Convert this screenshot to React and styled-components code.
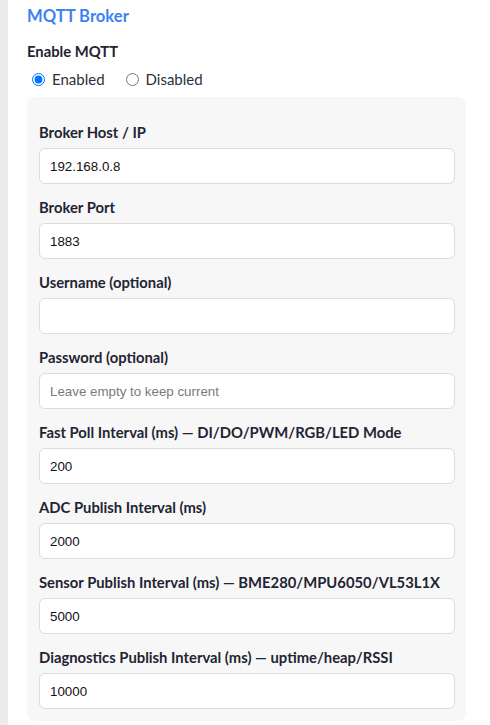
import React from 'react'
import styled, { createGlobalStyle } from 'styled-components'

const GlobalStyle = createGlobalStyle`
    html, body {
        margin: 0;
        padding: 0;
        background: #ffffff;
    }

    body {
        font-family: Lato, 'Noto Sans', 'Liberation Sans', sans-serif;
        color: #1f2433;
    }
`

const Page = styled.div`
    display: flex;
    min-height: 725px;
`

const SideRail = styled.div`
    width: 8px;
    flex-shrink: 0;
    background: #ebebeb;
`

const Section = styled.section`
    width: 439px;
    padding: 0 0 0 19px;
`

const Title = styled.h2`
    margin: 0;
    padding-top: 4px;
    font-size: 16.6px;
    line-height: 24px;
    font-weight: 700;
    color: #3b82f6;
`

const Label = styled.label`
    display: block;
    font-size: 14.8px;
    line-height: 20px;
    font-weight: 700;
    color: #1f2433;
    margin-bottom: 6px;
    white-space: nowrap;
`

const EnableLabel = styled(Label)`
    margin-top: 13px;
    margin-bottom: 0;
`

const RadioRow = styled.div`
    display: flex;
    align-items: center;
    height: 24px;
    margin-top: 6px;
`

const RadioOption = styled.label`
    display: flex;
    align-items: center;
    margin-right: 16px;
    font-size: 15px;
    color: #2a2f3a;

    input {
        margin: 0 7px 0 5px;
        width: 13px;
        height: 13px;
    }
`

const Panel = styled.div`
    margin-top: 6px;
    background: #f7f7f7;
    border-radius: 8px;
    padding: 12px 11px 12px 12px;
`

const Field = styled.div`
    margin-top: 13px;
`

const Input = styled.input`
    display: block;
    box-sizing: border-box;
    width: 100%;
    height: 36px;
    padding: 0 10px;
    border: 1px solid #dcdcdc;
    border-radius: 6px;
    background: #ffffff;
    font-family: 'Liberation Sans', Arial, sans-serif;
    font-size: 13.33px;
    color: #111111;
    outline: none;

    &::placeholder {
        color: #7a7a7a;
    }
`

const fields = [
    { label: 'Broker Host / IP', value: '192.168.0.8' },
    { label: 'Broker Port', value: '1883' },
    { label: 'Username (optional)', value: '' },
    { label: 'Password (optional)', value: '', placeholder: 'Leave empty to keep current', type: 'password' },
    { label: 'Fast Poll Interval (ms) — DI/DO/PWM/RGB/LED Mode', value: '200' },
    { label: 'ADC Publish Interval (ms)', value: '2000' },
    { label: 'Sensor Publish Interval (ms) — BME280/MPU6050/VL53L1X', value: '5000' },
    { label: 'Diagnostics Publish Interval (ms) — uptime/heap/RSSI', value: '10000' },
]

const App = () => (
    <Page>
        <GlobalStyle />
        <SideRail />
        <Section>
            <Title>MQTT Broker</Title>
            <EnableLabel>Enable MQTT</EnableLabel>
            <RadioRow>
                <RadioOption>
                    <input type='radio' name='mqtt' defaultChecked />
                    Enabled
                </RadioOption>
                <RadioOption>
                    <input type='radio' name='mqtt' />
                    Disabled
                </RadioOption>
            </RadioRow>
            <Panel>
                {fields.map((f) => (
                    <Field key={f.label}>
                        <Label>{f.label}</Label>
                        <Input
                            type={f.type || 'text'}
                            defaultValue={f.value}
                            placeholder={f.placeholder}
                        />
                    </Field>
                ))}
            </Panel>
        </Section>
    </Page>
)

export default App
